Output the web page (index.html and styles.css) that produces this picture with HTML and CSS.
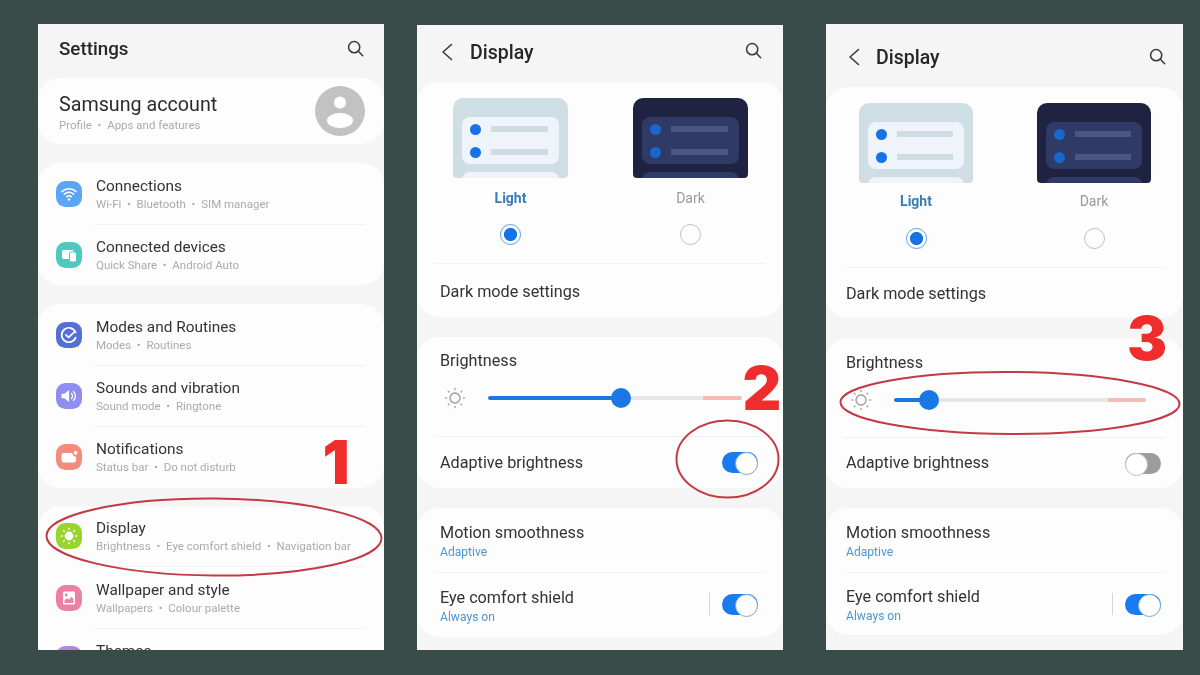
FILE: index.html
```html
<!DOCTYPE html>
<html lang="en">
<head>
<meta charset="utf-8">
<title>Display brightness steps</title>
<link rel="stylesheet" href="styles.css">
</head>
<body>
<main class="stage">

  <section class="phone phone-a">
    <header class="head head-a">
      <h1 class="head-title">Settings</h1>
      <svg class="search" viewBox="0 0 18 18"><circle cx="7.6" cy="7.6" r="5.9"/><path d="M12 12l4.6 4.6"/></svg>
    </header>

    <div class="card account">
      <div>
        <div class="account-name">Samsung account</div>
        <div class="sub">Profile &nbsp;•&nbsp; Apps and features</div>
      </div>
      <svg class="avatar" viewBox="0 0 50 50"><circle cx="25" cy="25" r="25" fill="#c2c2c2"/><circle cx="25" cy="16.5" r="6" fill="#fff"/><ellipse cx="25" cy="34.5" rx="13" ry="7.6" fill="#fff"/></svg>
    </div>

    <div class="card list gap-19">
      <div class="row">
        <svg class="app" viewBox="0 0 26 26"><rect width="26" height="26" rx="9.5" fill="#5ba6f4"/><g fill="none" stroke="#fff" stroke-width="1.5" stroke-linecap="round"><path d="M5.8 10.6a10.4 10.4 0 0 1 14.4 0"/><path d="M8.3 13.2a6.8 6.8 0 0 1 9.4 0"/><path d="M10.7 15.8a3.3 3.3 0 0 1 4.6 0"/></g><circle cx="13" cy="18.4" r="1.2" fill="#fff"/></svg>
        <div class="text"><div class="title">Connections</div><div class="sub">Wi-Fi &nbsp;•&nbsp; Bluetooth &nbsp;•&nbsp; SIM manager</div></div>
      </div>
      <div class="row">
        <svg class="app" viewBox="0 0 26 26"><rect width="26" height="26" rx="9.5" fill="#4ccabf"/><rect x="6" y="8" width="12" height="9" rx="1.8" fill="#fff"/><rect x="13.5" y="10" width="7" height="10" rx="1.8" fill="#fff" stroke="#4ccabf"/></svg>
        <div class="text"><div class="title">Connected devices</div><div class="sub">Quick Share &nbsp;•&nbsp; Android Auto</div></div>
      </div>
    </div>

    <div class="card list gap-19">
      <div class="row">
        <svg class="app" viewBox="0 0 26 26"><rect width="26" height="26" rx="9.5" fill="#5570d2"/><path d="M19.6 10.4A7.2 7.2 0 1 0 19.6 15.6" fill="none" stroke="#fff" stroke-width="1.7" stroke-linecap="round"/><path d="M9.8 12.8l2.8 2.6 6.4-6" fill="none" stroke="#fff" stroke-width="1.7" stroke-linecap="round" stroke-linejoin="round"/></svg>
        <div class="text"><div class="title">Modes and Routines</div><div class="sub">Modes &nbsp;•&nbsp; Routines</div></div>
      </div>
      <div class="row">
        <svg class="app" viewBox="0 0 26 26"><rect width="26" height="26" rx="9.5" fill="#8f8cf2"/><path d="M5.5 10.8h3l4.6-3.8v12l-4.6-3.8h-3z" fill="#fff"/><g fill="none" stroke="#fff" stroke-width="1.3" stroke-linecap="round"><path d="M15.4 10.4a3.4 3.4 0 0 1 0 5.2"/><path d="M17.4 8.4a6.2 6.2 0 0 1 0 9.2"/></g></svg>
        <div class="text"><div class="title">Sounds and vibration</div><div class="sub">Sound mode &nbsp;•&nbsp; Ringtone</div></div>
      </div>
      <div class="row">
        <svg class="app" viewBox="0 0 26 26"><rect width="26" height="26" rx="9.5" fill="#f38c7c"/><path d="M7.8 9h8.6a4 4 0 0 0 3.6 3.8v3.4a2.3 2.3 0 0 1-2.3 2.3H7.8a2.3 2.3 0 0 1-2.3-2.3v-4.9A2.3 2.3 0 0 1 7.8 9z" fill="#fff"/><circle cx="19.6" cy="8.8" r="1.9" fill="#fff"/></svg>
        <div class="text"><div class="title">Notifications</div><div class="sub">Status bar &nbsp;•&nbsp; Do not disturb</div></div>
      </div>
    </div>

    <div class="card list gap-18">
      <div class="row">
        <svg class="app" viewBox="0 0 26 26"><rect width="26" height="26" rx="9.5" fill="#97d42c"/><circle cx="13" cy="13" r="4.4" fill="#fff"/><g stroke="#fff" stroke-width="1.4" stroke-linecap="round"><path d="M13 5.2v1"/><path d="M13 19.8v1"/><path d="M5.2 13h1"/><path d="M19.8 13h1"/><path d="M7.5 7.5l.7.7"/><path d="M17.8 17.8l.7.7"/><path d="M7.5 18.5l.7-.7"/><path d="M17.8 8.2l.7-.7"/></g></svg>
        <div class="text"><div class="title">Display</div><div class="sub">Brightness &nbsp;•&nbsp; Eye comfort shield &nbsp;•&nbsp; Navigation bar</div></div>
      </div>
      <div class="row">
        <svg class="app" viewBox="0 0 26 26"><rect width="26" height="26" rx="9.5" fill="#ec7fa4"/><rect x="7" y="6.5" width="12" height="13" rx="1.6" fill="#fff"/><circle cx="10.2" cy="10" r="1.4" fill="#ec7fa4"/><path d="M8.5 18v-2.8l2.6-2 2 1.6 2.4-3 2 2.4V18z" fill="#ec7fa4"/></svg>
        <div class="text"><div class="title">Wallpaper and style</div><div class="sub">Wallpapers &nbsp;•&nbsp; Colour palette</div></div>
      </div>
      <div class="row">
        <svg class="app" viewBox="0 0 26 26"><rect width="26" height="26" rx="9.5" fill="#b583e0"/></svg>
        <div class="text text-single"><div class="title">Themes</div></div>
      </div>
    </div>
  </section>

  <section class="phone phone-b">
    <header class="head">
      <svg class="back" viewBox="0 0 12 18"><path d="M10.5 1.5L2 9l8.5 7.5"/></svg>
      <h1 class="head-title display-title">Display</h1>
      <svg class="search" viewBox="0 0 18 18"><circle cx="7.6" cy="7.6" r="5.9"/><path d="M12 12l4.6 4.6"/></svg>
    </header>

    <div class="card mode-card">
      <div class="modes">
        <div class="mode">
          <div class="preview preview-light">
            <div class="panel"><div class="line"><i class="dot"></i><i class="bar"></i></div><div class="line"><i class="dot"></i><i class="bar"></i></div></div>
            <div class="stub"></div>
          </div>
          <div class="mode-label on">Light</div>
          <div class="radio on"></div>
        </div>
        <div class="mode">
          <div class="preview preview-dark">
            <div class="panel"><div class="line"><i class="dot"></i><i class="bar"></i></div><div class="line"><i class="dot"></i><i class="bar"></i></div></div>
            <div class="stub"></div>
          </div>
          <div class="mode-label">Dark</div>
          <div class="radio"></div>
        </div>
      </div>
      <div class="plain-row dark-row"><span class="label">Dark mode settings</span></div>
    </div>

    <div class="card bright-card">
      <div class="label bright-label">Brightness</div>
      <div class="slider">
        <svg class="sun" viewBox="0 0 24 24"><circle cx="12" cy="12" r="5" fill="none" stroke="#9a9a9a" stroke-width="1.3"/><g stroke="#a8a8a8" stroke-width="1.5" stroke-linecap="round"><path d="M12 2.5v1"/><path d="M12 20.5v1"/><path d="M2.5 12h1"/><path d="M20.5 12h1"/><path d="M5.3 5.3l.6.6"/><path d="M18.1 18.1l.6.6"/><path d="M5.3 18.7l.6-.6"/><path d="M18.1 5.9l.6-.6"/></g></svg>
        <div class="track"><div class="fill" style="width:133px"></div><div class="rest"></div><div class="warn" style="width:39px"></div></div>
      </div>
      <div class="plain-row switch-row"><span class="label">Adaptive brightness</span><div class="toggle"></div></div>
    </div>

    <div class="card motion-card">
      <div class="info-row motion-row"><div class="label">Motion smoothness</div><div class="accent">Adaptive</div></div>
      <div class="info-row eye-row">
        <div><div class="label">Eye comfort shield</div><div class="accent">Always on</div></div>
        <div class="controls"><i class="sep"></i><div class="toggle"></div></div>
      </div>
    </div>
  </section>

  <section class="phone phone-c">
    <header class="head">
      <svg class="back" viewBox="0 0 12 18"><path d="M10.5 1.5L2 9l8.5 7.5"/></svg>
      <h1 class="head-title display-title">Display</h1>
      <svg class="search" viewBox="0 0 18 18"><circle cx="7.6" cy="7.6" r="5.9"/><path d="M12 12l4.6 4.6"/></svg>
    </header>

    <div class="card mode-card">
      <div class="modes">
        <div class="mode">
          <div class="preview preview-light">
            <div class="panel"><div class="line"><i class="dot"></i><i class="bar"></i></div><div class="line"><i class="dot"></i><i class="bar"></i></div></div>
            <div class="stub"></div>
          </div>
          <div class="mode-label on">Light</div>
          <div class="radio on"></div>
        </div>
        <div class="mode">
          <div class="preview preview-dark">
            <div class="panel"><div class="line"><i class="dot"></i><i class="bar"></i></div><div class="line"><i class="dot"></i><i class="bar"></i></div></div>
            <div class="stub"></div>
          </div>
          <div class="mode-label">Dark</div>
          <div class="radio"></div>
        </div>
      </div>
      <div class="plain-row dark-row"><span class="label">Dark mode settings</span></div>
    </div>

    <div class="card bright-card">
      <div class="label bright-label">Brightness</div>
      <div class="slider">
        <svg class="sun" viewBox="0 0 24 24"><circle cx="12" cy="12" r="5" fill="none" stroke="#9a9a9a" stroke-width="1.3"/><g stroke="#a8a8a8" stroke-width="1.5" stroke-linecap="round"><path d="M12 2.5v1"/><path d="M12 20.5v1"/><path d="M2.5 12h1"/><path d="M20.5 12h1"/><path d="M5.3 5.3l.6.6"/><path d="M18.1 18.1l.6.6"/><path d="M5.3 18.7l.6-.6"/><path d="M18.1 5.9l.6-.6"/></g></svg>
        <div class="track"><div class="fill" style="width:35px"></div><div class="rest"></div><div class="warn" style="width:38px"></div></div>
      </div>
      <div class="plain-row switch-row"><span class="label">Adaptive brightness</span><div class="toggle off"></div></div>
    </div>

    <div class="card motion-card">
      <div class="info-row motion-row"><div class="label">Motion smoothness</div><div class="accent">Adaptive</div></div>
      <div class="info-row eye-row">
        <div><div class="label">Eye comfort shield</div><div class="accent">Always on</div></div>
        <div class="controls"><i class="sep"></i><div class="toggle"></div></div>
      </div>
    </div>
  </section>

  <svg class="marks" viewBox="0 0 1200 675">
    <ellipse cx="214" cy="537" rx="167.5" ry="38.5" transform="rotate(0.4 214 537)"/>
    <ellipse cx="727.5" cy="459" rx="51" ry="38.5"/>
    <ellipse cx="1010" cy="403" rx="169.5" ry="31" transform="rotate(0.3 1010 403)"/>
  </svg>
  <div class="step step-1">1</div>
  <div class="step step-2">2</div>
  <div class="step step-3">3</div>
</main>
</body>
</html>
```

FILE: styles.css
```css
* { box-sizing: border-box; }

html, body {
  margin: 0;
  height: 100%;
}

body {
  background: #3a4c4a;
  font-family: Roboto, "Noto Sans", "Liberation Sans", sans-serif;
  color: #2a2a2a;
  overflow: hidden;
}

.stage {
  position: relative;
  width: 1200px;
  height: 675px;
  display: flex;
  align-items: flex-start;
  padding: 24px 0 0 38px;
}

/* phones */
.phone {
  display: flex;
  flex-direction: column;
  flex: none;
  height: 626px;
  background: #f5f5f5;
  overflow: hidden;
  filter: blur(0.4px);
}

.phone-a { width: 346px; }

.phone-b {
  width: 366px;
  height: 625px;
  margin: 1px 0 0 33px;
  --pad-l: 23px;
  --pad-r: 25px;
}

.phone-c {
  width: 357px;
  margin-left: 43px;
  --pad-l: 20px;
  --pad-r: 22px;
}

/* header */
.head {
  display: flex;
  align-items: center;
  flex: none;
  height: 54px;
  padding: 0 21.5px 0 24px;
}

.head-a {
  padding: 0 20px 4px 21px;
}

.head-a .search { margin-top: -2px; }

.phone-b .head {
  height: 57px;
  padding-bottom: 3px;
}

.phone-b .search { margin-top: -4px; }

.phone-c .head {
  height: 63px;
  padding: 3px 17.5px 0 22px;
}

.phone-c .search { margin-top: -2px; }

.head-title {
  flex: 1;
  margin: 0;
  font-size: 18.8px;
  font-weight: 500;
  color: #262626;
}

.display-title {
  margin-left: 17px;
  font-size: 19.5px;
}

.phone-c .display-title { margin-left: 16px; }

.search {
  width: 17px;
  height: 17px;
  fill: none;
  stroke: #3a3a3a;
  stroke-width: 1.6;
  stroke-linecap: round;
}

.back {
  flex: none;
  width: 12px;
  height: 18px;
  fill: none;
  stroke: #3a3a3a;
  stroke-width: 1.6;
  stroke-linecap: round;
  stroke-linejoin: round;
}

/* cards */
.card {
  flex: none;
  background: #fdfdfd;
  border-radius: 22px;
}

.gap-19 { margin-top: 19px; }
.gap-18 { margin-top: 18px; }

.account {
  display: flex;
  align-items: center;
  justify-content: space-between;
  height: 66px;
  padding: 0 19px 0 21px;
}

.account-name {
  padding-top: 5px;
  font-size: 19.7px;
  line-height: 24px;
  color: #2c2c2c;
}

.account .sub { margin-top: -1px; }

.avatar {
  width: 50px;
  height: 50px;
}

.row {
  display: flex;
  align-items: center;
  height: 61.5px;
  padding: 0 16px 0 18px;
}

.row:last-child { height: 60.5px; }

.row:not(:last-child) {
  background: linear-gradient(#f2f2f2, #f2f2f2) 56px 100% / 271px 1px no-repeat;
}

.app {
  flex: none;
  width: 26px;
  height: 26px;
  margin-right: 14px;
}

.text { padding-top: 2px; }

.text-single { padding-bottom: 18px; }

.title {
  font-size: 15.4px;
  line-height: 18px;
  color: #333;
  white-space: nowrap;
}

.sub {
  font-size: 11.5px;
  line-height: 18px;
  color: #ababab;
  white-space: nowrap;
}

/* theme chooser */
.mode-card {
  padding-top: 16px;
  height: 235px;
}

.phone-c .mode-card { height: 231px; }

.modes {
  display: flex;
  gap: 65px;
  padding-left: 36px;
}

.phone-c .modes {
  gap: 64px;
  padding-left: 33px;
}

.mode {
  display: flex;
  flex-direction: column;
  align-items: center;
  width: 115px;
}

.phone-c .mode { width: 114px; }

.preview {
  position: relative;
  display: flex;
  flex-direction: column;
  align-items: center;
  gap: 8px;
  width: 100%;
  height: 80px;
  padding: 19px 9px 0;
  border-radius: 10px 10px 4px 4px;
  overflow: hidden;
}

.preview-light { background: #cfdde5; }
.preview-dark { background: #1f2341; }

.panel {
  display: flex;
  flex-direction: column;
  justify-content: center;
  gap: 12px;
  flex: none;
  width: 100%;
  height: 47px;
  padding: 0 11px 0 8px;
  border-radius: 8px;
}

.stub {
  flex: none;
  width: 100%;
  height: 30px;
  border-radius: 8px;
}

.preview-light .panel,
.preview-light .stub { background: #eef4f9; }

.preview-dark .panel,
.preview-dark .stub { background: #2f3a66; }

.line {
  display: flex;
  align-items: center;
  gap: 10px;
}

.dot {
  flex: none;
  width: 11px;
  height: 11px;
  border-radius: 50%;
  background: #1673e6;
}

.preview-dark .dot { background: #1a67cc; }

.bar {
  flex: 1;
  height: 6px;
  background: #cfdde3;
}

.preview-dark .bar { background: #4b5782; }

.mode-label {
  margin-top: 10px;
  font-size: 14px;
  line-height: 20px;
  color: #9a9a9a;
}

.mode-label.on {
  font-weight: 700;
  color: #3a7bb8;
}

.phone-c .mode-label { margin-top: 8px; }

.radio {
  flex: none;
  width: 21px;
  height: 21px;
  margin-top: 16px;
  border-radius: 50%;
  border: 1.5px solid #bdbdbd;
}

.phone-c .radio { margin-top: 17px; }

.radio.on {
  border-color: #5a9fe8;
  background: radial-gradient(circle, #1473e6 0 6.2px, #fff 6.9px);
}

.label {
  font-size: 16.2px;
  line-height: 20px;
  color: #333;
  white-space: nowrap;
}

.plain-row {
  display: flex;
  align-items: center;
  justify-content: space-between;
  border-top: 1px solid #f2f2f2;
  margin: 0 18px;
  padding: 0 calc(var(--pad-r) - 18px) 0 5px;
}

.phone-c .plain-row {
  padding-left: 2px;
}

.dark-row {
  height: 54px;
  margin-top: 18px;
  padding-top: 3px;
}

.phone-c .dark-row {
  height: 51px;
  padding-top: 2px;
}

/* brightness */
.bright-card {
  margin-top: 20px;
  height: 151px;
  padding-top: 14px;
}

.phone-c .bright-card {
  height: 150px;
  padding-top: 15px;
}

.bright-label { padding-left: var(--pad-l); }

.slider {
  display: flex;
  align-items: center;
  gap: 21px;
  height: 24px;
  margin-top: 15px;
  padding-left: 26px;
}

.phone-c .slider { padding-left: 23px; }

.sun {
  flex: none;
  width: 24px;
  height: 24px;
}

.track {
  display: flex;
  width: 254px;
  height: 4px;
}

.phone-c .track { width: 252px; }

.fill {
  position: relative;
  flex: none;
  height: 100%;
  background: #1a78e5;
  border-radius: 2px 0 0 2px;
}

.fill::after {
  content: "";
  position: absolute;
  right: -10px;
  top: -8px;
  width: 20px;
  height: 20px;
  border-radius: 50%;
  background: #1a78e5;
}

.rest {
  flex: 1;
  background: #e7e7e7;
}

.warn {
  flex: none;
  background: #f3bcb4;
  border-radius: 0 2px 2px 0;
}

.switch-row {
  height: 52px;
  margin-top: 26px;
}

.phone-c .switch-row {
  height: 51px;
  margin-top: 25px;
}

.toggle {
  position: relative;
  flex: none;
  width: 36px;
  height: 21px;
  border-radius: 11px;
  background: #1a7bee;
}

.toggle::after {
  content: "";
  position: absolute;
  right: 0;
  top: 0;
  width: 21px;
  height: 21px;
  border-radius: 50%;
  background: #fff;
  border: 1.5px solid #7ea6cc;
}

.toggle.off { background: #9c9c9c; }

.toggle.off::after {
  right: auto;
  left: 0;
  border-color: #bdbdbd;
}

/* motion / eye comfort */
.motion-card {
  margin-top: 20px;
  height: 129px;
}

.phone-c .motion-card { height: 127px; }

.info-row {
  margin: 0 18px;
  padding-left: 5px;
}

.phone-c .info-row { padding-left: 2px; }

.motion-row {
  height: 65px;
  padding-top: 15px;
  border-bottom: 1px solid #f2f2f2;
}

.eye-row {
  display: flex;
  align-items: flex-start;
  justify-content: space-between;
  padding-top: 15px;
  padding-right: calc(var(--pad-r) - 18px);
}

.phone-c .eye-row { padding-top: 14px; }

.accent {
  margin-top: 1px;
  font-size: 12.1px;
  line-height: 16px;
  color: #4d97cf;
  white-space: nowrap;
}

.controls {
  display: flex;
  align-items: center;
  gap: 12px;
  margin-top: 5px;
}

.phone-c .controls { margin-top: 6px; }

.sep {
  flex: none;
  width: 1px;
  height: 22px;
  background: #d6d6d6;
}

/* annotations drawn on top of the screenshots */
.marks {
  position: absolute;
  inset: 0;
  width: 1200px;
  height: 675px;
  fill: none;
  stroke: #c23a44;
  stroke-width: 2;
  pointer-events: none;
}

.step {
  position: absolute;
  width: 50px;
  font-family: Inter, Roboto, sans-serif;
  font-weight: 900;
  font-size: 60px;
  line-height: 70px;
  text-align: center;
  color: #f02d2d;
}

.step-1 { left: 311px; top: 427px; }
.step-2 { left: 737px; top: 353px; }
.step-3 { left: 1122px; top: 303px; }
```
